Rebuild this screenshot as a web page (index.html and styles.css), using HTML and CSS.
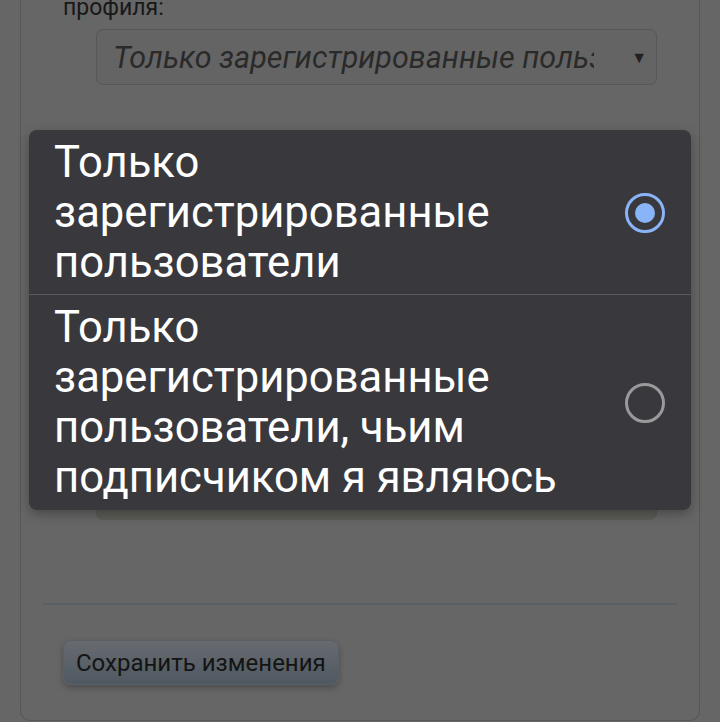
FILE: index.html
```html
<!DOCTYPE html>
<html lang="ru">
<head>
<meta charset="utf-8">
<title>Настройки приватности</title>
<link rel="stylesheet" href="styles.css">
</head>
<body>
<div class="page">
  <div class="panel">
    <p class="label">Кто может просматривать страницу профиля:</p>
    <div class="select">
      <span class="select-text">Только зарегистрированные пользователи</span>
      <span class="select-arrow">▼</span>
    </div>
    <p class="label label-hidden">Кто может отправлять мне сообщения:</p>
    <div class="select select-alt">
      <span class="select-text">Только зарегистрированные пользователи</span>
      <span class="select-arrow">▼</span>
    </div>
    <hr class="divider">
    <div class="actions">
      <button class="btn">Сохранить изменения</button>
    </div>
  </div>
</div>

<div class="popup">
  <div class="option">
    <span class="option-text">Только зарегистрированные пользователи</span>
    <span class="radio radio-on"></span>
  </div>
  <div class="option">
    <span class="option-text">Только зарегистрированные пользователи, чьим подписчиком я являюсь</span>
    <span class="radio"></span>
  </div>
</div>
</body>
</html>
```

FILE: styles.css
```css
html, body {
  margin: 0;
  padding: 0;
  height: 100%;
  overflow: hidden;
}
body {
  background: #666666;
  font-family: Roboto, "Noto Sans", sans-serif;
  position: relative;
}
.page {
  margin-top: -45px;
}
.panel {
  margin: 0 20px;
  border: 1px solid #575757;
  border-top: none;
  border-radius: 0 0 10px 10px;
  background: #666666;
  padding-top: 12px;
  padding-bottom: 35px;
}
.label {
  margin: 0 0 0 42px;
  max-width: 420px;
  font-size: 23px;
  line-height: 27px;
  color: #181818;
}
.select {
  margin: 8px 0 0 75px;
  width: 561px;
  height: 56px;
  box-sizing: border-box;
  border: 1px solid #575757;
  border-radius: 7px;
  background: #646464;
  display: flex;
  align-items: center;
  padding: 0 9px 0 16px;
}
.select-text {
  flex: 1;
  min-width: 0;
  white-space: nowrap;
  overflow: hidden;
  font-style: italic;
  font-size: 30.5px;
  color: #2a2a2a;
  margin-right: 37px;
}
.select-arrow {
  font-size: 16px;
  color: #222;
}
.label-hidden {
  max-width: none;
  white-space: nowrap;
  margin-top: 60px;
  padding-bottom: 292px;
}
.select-alt {
  margin-top: 0;
  background: #5d5d57;
  border-color: #5a5a55;
}
.divider {
  margin: 83px 22px 0 22px;
  border: none;
  border-top: 2px solid #586065;
  height: 0;
}
.actions {
  padding: 35px 0 0 42px;
}
.btn {
  font-family: Roboto, "Noto Sans", sans-serif;
  font-size: 24px;
  color: #141414;
  height: 45px;
  padding: 0 12px;
  border: 1px solid #5a6068;
  border-radius: 8px;
  background: linear-gradient(#676b70, #4f5961);
  box-shadow: 0 3px 6px rgba(0,0,0,0.25);
}
.popup {
  position: absolute;
  left: 29px;
  top: 130px;
  width: 662px;
  background: #39383d;
  border-radius: 8px;
  box-shadow: 0 4px 12px rgba(0,0,0,0.3);
  overflow: hidden;
}
.option {
  display: flex;
  align-items: center;
  padding: 8px 26px 6px 25px;
}
.option + .option {
  border-top: 1px solid #5a5a5e;
  padding-top: 8px;
  padding-bottom: 7px;
}
.option-text {
  flex: 1;
  font-size: 43.6px;
  line-height: 50px;
  color: #ffffff;
  padding-right: 20px;
}
.radio {
  width: 40px;
  height: 40px;
  box-sizing: border-box;
  border: 3px solid #9a9a9c;
  border-radius: 50%;
  flex: none;
  position: relative;
}
.radio-on {
  border-color: #8ab4f8;
}
.radio-on::after {
  content: "";
  position: absolute;
  left: 7px;
  top: 7px;
  width: 20px;
  height: 20px;
  border-radius: 50%;
  background: #8ab4f8;
}
```
